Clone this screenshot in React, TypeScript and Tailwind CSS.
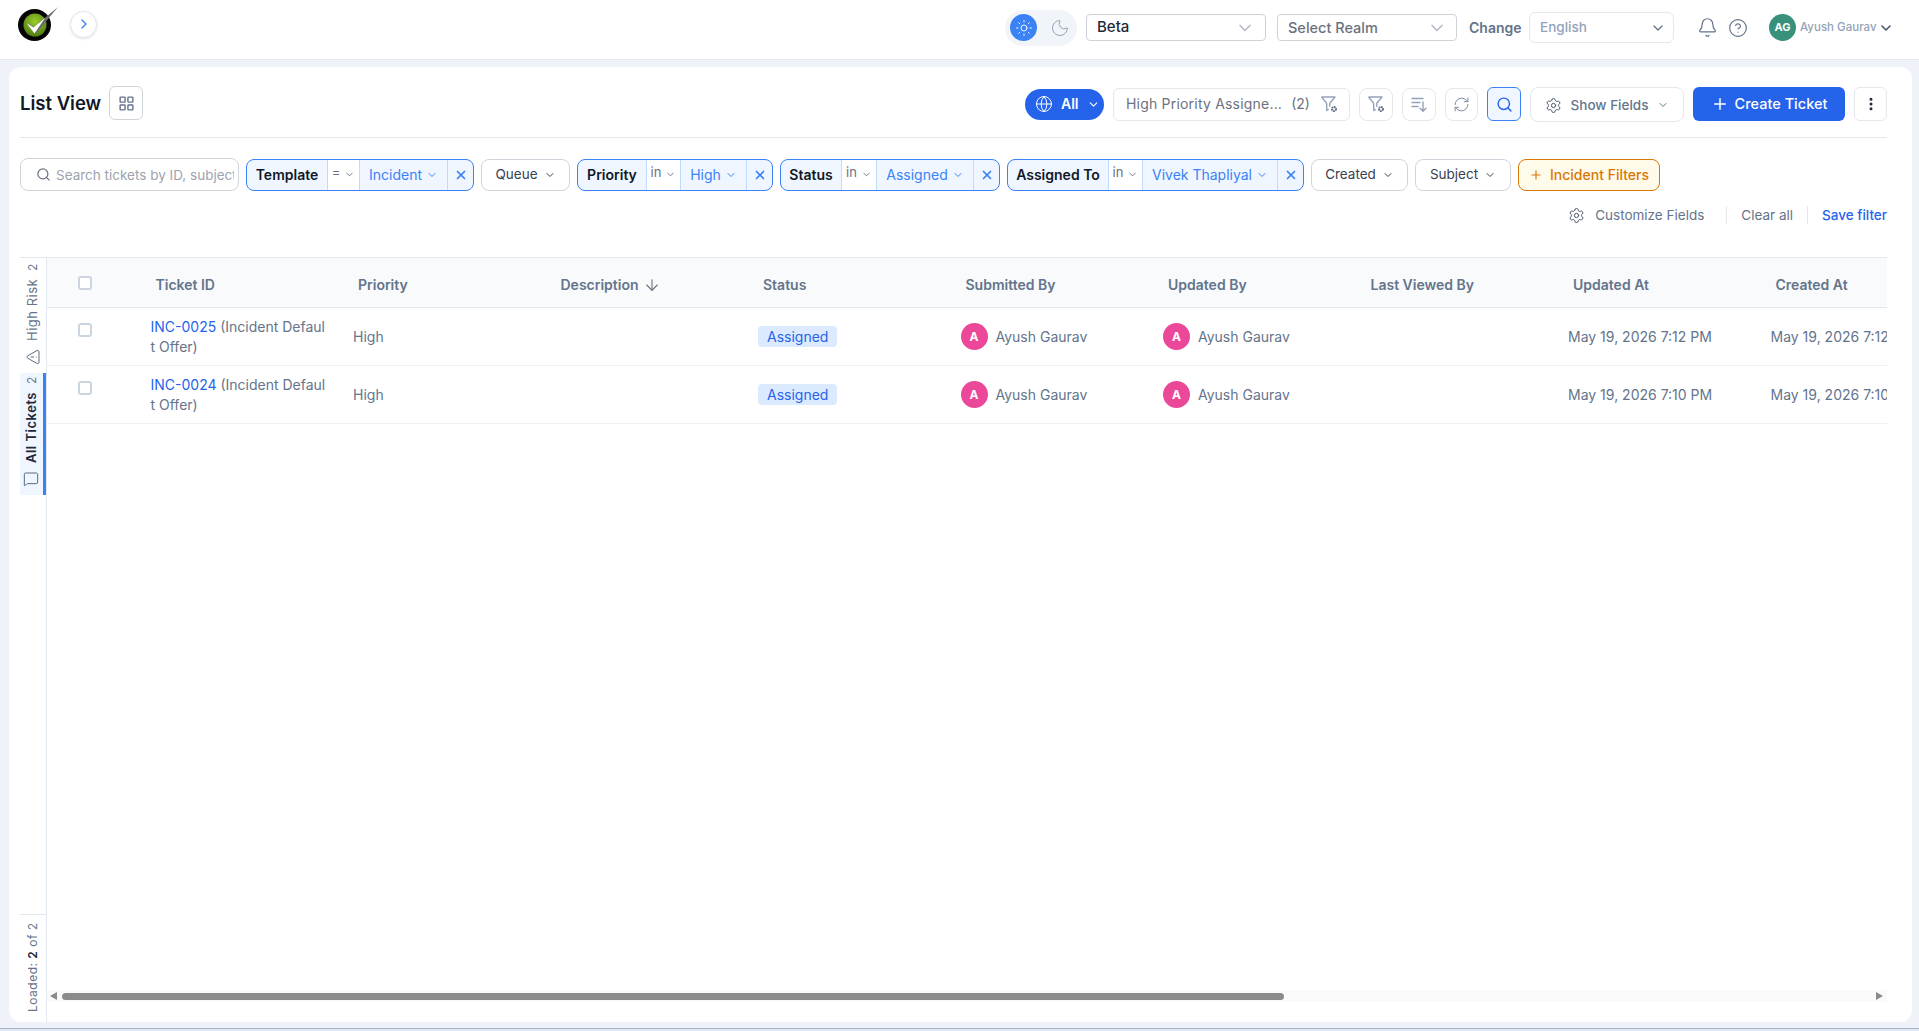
import React from "react";
import {
  ArrowDown,
  Bell,
  ChevronDown,
  ChevronRight,
  CircleHelp,
  EllipsisVertical,
  Globe,
  LayoutGrid,
  MessageSquare,
  Moon,
  Plus,
  RefreshCw,
  Search,
  Settings,
  Sun,
  TriangleAlert,
  X,
} from "lucide-react";

function Logo() {
  return (
    <svg width="40" height="34" viewBox="0 0 40 34" className="shrink-0">
      <defs>
        <radialGradient id="ball" cx="50%" cy="35%" r="65%">
          <stop offset="0%" stopColor="#9ccc2c" />
          <stop offset="100%" stopColor="#4f7f10" />
        </radialGradient>
      </defs>
      <ellipse cx="16.5" cy="18" rx="16.5" ry="16" fill="#050505" />
      <circle cx="17" cy="18" r="11.5" fill="url(#ball)" />
      <path d="M8 15.5 L16 20 L40 0 L17.5 27 Z" fill="#6b6b6b" />
      <path d="M8.5 16 L15.5 20.5 L27 11 L16.5 26.5 Z" fill="#ffffff" />
    </svg>
  );
}

function FunnelGear({ size = 20 }: { size?: number }) {
  return (
    <svg width={size} height={size} viewBox="0 0 20 20" fill="none" stroke="#94a3b8" strokeWidth="1.4">
      <path d="M2.5 3h13.5l-5.2 6.2v3.6M7.7 9.2 2.5 3M7.7 9.2v7.3l2-1.2" strokeLinejoin="round" />
      <circle cx="15" cy="15" r="2" strokeWidth="2" strokeDasharray="1.6 0.5" stroke="#64748b" />
    </svg>
  );
}

function SortIcon() {
  return (
    <svg width="18" height="18" viewBox="0 0 18 18" fill="none" stroke="#94a3b8" strokeWidth="1.4" strokeLinecap="round">
      <path d="M2 3.5h11M2 7.5h8M2 11.5h6M13 7v9M10 13.2l3 3 3-3" />
    </svg>
  );
}

function Chip({
  label,
  op,
  value,
  width,
  labelWidth,
  opWidth,
}: {
  label: string;
  op: string;
  value: string;
  width: string;
  labelWidth: string;
  opWidth: string;
}) {
  return (
    <div className={`flex h-8 shrink-0 overflow-hidden rounded-lg border border-[#3b82f6] bg-[#eff6ff] ${width}`}>
      <div className={`flex shrink-0 items-center justify-center text-sm font-semibold text-[#111827] ${labelWidth}`}>{label}</div>
      <div className={`flex shrink-0 items-center justify-center gap-1 border-x border-[#bfdbfe] bg-white text-[13px] text-[#6b7280] ${opWidth}`}>
        <span className="-mt-[3px]">{op}</span>
        <ChevronDown size={11} />
      </div>
      <div className="flex flex-1 items-center justify-center gap-1 text-sm text-[#3b82f6]">
        {value}
        <ChevronDown size={12} />
      </div>
      <div className="flex w-[26px] shrink-0 items-center justify-center border-l border-[#bfdbfe] text-[#3b82f6]">
        <X size={14} strokeWidth={3} />
      </div>
    </div>
  );
}

function PlainFilter({ label, width }: { label: string; width: string }) {
  return (
    <div className={`flex h-8 shrink-0 items-center justify-center gap-[6px] rounded-lg border border-[#d1d5db] bg-white text-[13.5px] text-[#374151] ${width}`}>
      {label}
      <ChevronDown size={12} />
    </div>
  );
}

function IconBox({ children, width = "w-[34px]" }: { children: React.ReactNode; width?: string }) {
  return (
    <div className={`flex h-[33px] shrink-0 items-center justify-center rounded-lg border border-[#e5e7eb] bg-white ${width}`}>
      {children}
    </div>
  );
}

const columns = [
  "Ticket ID",
  "Priority",
  "Description",
  "Status",
  "Submitted By",
  "Updated By",
  "Last Viewed By",
  "Updated At",
  "Created At",
];

const tickets = [
  { id: "INC-0025", date: "May 19, 2026 7:12 PM" },
  { id: "INC-0024", date: "May 19, 2026 7:10 PM" },
];

function Person() {
  return (
    <div className="flex items-center gap-2">
      <span className="flex h-[27px] w-[27px] items-center justify-center rounded-full bg-[#ec4899] text-xs font-bold text-white">A</span>
      <span>Ayush Gaurav</span>
    </div>
  );
}

function Cell({ children }: { children?: React.ReactNode }) {
  return <div className="w-[202.5px] shrink-0 whitespace-nowrap pl-[3px]">{children}</div>;
}

function Checkbox() {
  return <span className="block h-[14px] w-[14px] rounded-[3px] border-2 border-[#cbd5e1] bg-white" />;
}

export default function App() {
  return (
    <div className="flex h-screen flex-col overflow-hidden bg-[#eff3f9] font-[Inter,sans-serif]">
      <header className="flex h-[60px] shrink-0 items-center justify-between border-b border-[#e2e8f0] bg-white pl-[18px] pr-[25px]">
        <div className="-mt-[11px] flex items-center gap-3">
          <Logo />
          <button className="flex h-[27px] w-[27px] items-center justify-center rounded-full border border-[#dbe3ef] text-[#3b82f6] shadow-sm">
            <ChevronRight size={16} />
          </button>
        </div>
        <div className="-mt-[4px] flex items-center">
          <div className="flex h-9 w-[72px] items-center gap-[13px] rounded-full bg-[#f1f5f9] pl-[5px]">
            <span className="flex h-[27px] w-[27px] items-center justify-center rounded-full bg-[#3b82f6] text-white">
              <Sun size={18} strokeWidth={1.2} />
            </span>
            <Moon size={20} strokeWidth={1.2} className="text-[#94a3b8]" />
          </div>
          <div className="ml-[9px] flex h-[27px] w-[180px] items-center justify-between rounded border border-[#cfd3d8] pl-[10px] pr-[10px] text-[15px] font-medium text-[#1f2937]">
            Beta
            <ChevronDown size={20} className="text-[#b6bcc6]" />
          </div>
          <div className="ml-[11px] flex h-[27px] w-[180px] items-center justify-between rounded border border-[#cfd3d8] pl-[10px] pr-[9px] text-[14.5px] font-medium text-[#6b7280]">
            Select Realm
            <ChevronDown size={20} className="text-[#b6bcc6]" />
          </div>
          <span className="ml-3 w-[50px] text-sm font-semibold text-[#64748b]">Change</span>
          <div className="ml-[10px] flex h-[31px] w-[145px] items-center justify-between rounded-md border border-[#e5e7eb] pl-[10px] pr-[7px] text-[13.5px] font-medium text-[#94a3b8]">
            English
            <ChevronDown size={16} className="text-[#64748b]" />
          </div>
          <Bell size={21} strokeWidth={1.4} className="ml-[23px] text-[#64748b]" />
          <CircleHelp size={20} strokeWidth={1.4} className="ml-[10px] text-[#64748b]" />
          <span className="ml-[21px] flex h-[27px] w-[27px] items-center justify-center rounded-full bg-[#38917a] text-[11px] font-bold text-white">AG</span>
          <span className="ml-1 w-[75px] whitespace-nowrap text-[11.5px] font-medium text-[#94a3b8]">Ayush Gaurav</span>
          <ChevronDown size={16} strokeWidth={2.4} className="ml-[3px] text-[#475569]" />
        </div>
      </header>

      <div className="flex min-h-0 flex-1 pl-[9px] pr-[7px] pt-[7px]">
        <main className="flex min-w-0 flex-1 flex-col rounded-xl bg-white pl-[11px] pr-[25px] pt-[19px]">
          <div className="flex h-9 shrink-0 items-center justify-between">
            <div className="-mt-[2px] flex items-center gap-2">
              <h1 className="pt-px text-[18.5px] font-semibold text-[#111827]">List View</h1>
              <div className="flex h-[34px] w-[34px] items-center justify-center rounded-md border border-[#d1d5db] text-[#64748b]">
                <LayoutGrid size={17} />
              </div>
            </div>
            <div className="flex items-center gap-[9px]">
              <div className="flex h-[31px] w-[79px] items-center gap-2 rounded-full bg-[#2563eb] pl-[10px] text-sm font-semibold text-white">
                <Globe size={18} strokeWidth={1.3} />
                All
                <ChevronDown size={13} />
              </div>
              <div className="flex h-[33px] w-[237px] items-center justify-between rounded-md border border-[#e5e7eb] pl-3 pr-[10px] text-sm text-[#6b7280]">
                <span className="tracking-[0.2px]">High Priority Assigne...</span>
                <span>(2)</span>
                <FunnelGear />
              </div>
              <IconBox><FunnelGear /></IconBox>
              <IconBox><SortIcon /></IconBox>
              <IconBox width="w-[33px]"><RefreshCw size={17} strokeWidth={1.4} className="text-[#7c8ba1]" /></IconBox>
              <div className="flex h-[34px] w-[34px] items-center justify-center rounded-md border border-[#3b82f6] bg-[#eff6ff] text-[#2563eb]">
                <Search size={17} />
              </div>
              <div className="flex h-[35px] w-[154px] items-center justify-center gap-[9px] rounded-lg border border-[#e5e7eb] pt-[2px] text-[13.5px] font-medium text-[#64748b]">
                <Settings size={17} strokeWidth={1.4} className="text-[#475569]" />
                Show Fields
                <ChevronDown size={12} />
              </div>
              <div className="flex h-[34px] w-[152px] items-center justify-center gap-[6px] rounded-md bg-[#2563eb] text-[14.5px] font-medium text-white">
                <Plus size={18} />
                Create Ticket
              </div>
              <div className="flex h-[34px] w-[33px] items-center justify-center rounded-md border border-[#e5e7eb] text-[#1f2937]">
                <EllipsisVertical size={16} strokeWidth={2.5} />
              </div>
            </div>
          </div>

          <div className="mt-[15px] h-px shrink-0 bg-[#e5e7eb]" />

          <div className="mt-5 flex shrink-0 items-center gap-[7px]">
            <div className="flex h-[33px] w-[219px] shrink-0 items-center gap-[5px] overflow-hidden rounded-lg border border-[#d1d5db] pl-[15px] pr-[4px]">
              <Search size={15} className="shrink-0 text-[#6b7280]" />
              <input
                className="min-w-0 flex-1 bg-transparent pt-px text-[13.5px] outline-none placeholder:text-[#9ca3af]"
                placeholder="Search tickets by ID, subject"
              />
            </div>
            <Chip label="Template" op="=" value="Incident" width="w-[228px]" labelWidth="w-[80px]" opWidth="w-[33px]" />
            <PlainFilter label="Queue" width="w-[89px]" />
            <Chip label="Priority" op="in" value="High" width="w-[196px]" labelWidth="w-[68px]" opWidth="w-[35px]" />
            <Chip label="Status" op="in" value="Assigned" width="w-[220px]" labelWidth="w-[60px]" opWidth="w-[36px]" />
            <Chip label="Assigned To" op="in" value="Vivek Thapliyal" width="w-[297px]" labelWidth="w-[100px]" opWidth="w-[35px]" />
            <PlainFilter label="Created" width="w-[97px]" />
            <PlainFilter label="Subject" width="w-[96px]" />
            <div className="flex h-8 w-[142px] shrink-0 items-center justify-center gap-[7px] rounded-lg border border-[#d97706] bg-[#fffbeb] text-sm font-medium text-[#d97706]">
              <Plus size={14} />
              Incident Filters
            </div>
          </div>

          <div className="mt-[14px] flex h-5 shrink-0 items-center justify-end text-[13.5px] text-[#64748b]">
            <Settings size={17} strokeWidth={1.4} className="mr-[10px] text-[#475569]" />
            <span>Customize Fields</span>
            <span className="ml-[22px] mr-[14px] h-[18px] w-px bg-[#e5e7eb]" />
            <span>Clear all</span>
            <span className="mx-[14px] h-[18px] w-px bg-[#e5e7eb]" />
            <span className="font-medium text-[#2563eb]">Save filter</span>
          </div>

          <div className="mt-8 flex min-h-0 flex-1">
            <aside className="flex w-[27px] shrink-0 flex-col border-r border-t border-[#e2e8f0]">
              <div className="h-[112px]">
                <div className="flex h-full w-full rotate-180 items-center gap-2 ps-[5px] text-[13px] tracking-[0.5px] text-[#64748b] [writing-mode:vertical-rl]">
                  <TriangleAlert size={16} strokeWidth={1.3} className="rotate-90 text-[#475569]" />
                  <span>High Risk</span>
                  <span className="text-xs">2</span>
                </div>
              </div>
              <div className="mt-[3px] h-[122px] border-r-[3px] border-[#3b82f6] bg-[#eff6ff]">
                <div className="flex h-full w-full rotate-180 items-center gap-2 ps-2 text-[13px] font-semibold tracking-[0.5px] text-[#1e293b] [writing-mode:vertical-rl]">
                  <MessageSquare size={16} strokeWidth={1.3} className="rotate-180 text-[#475569]" />
                  <span>All Tickets</span>
                  <span className="text-xs font-normal text-[#64748b]">2</span>
                </div>
              </div>
              <div className="mt-auto h-[108px] border-t border-[#e2e8f0]">
                <div className="flex h-full w-full rotate-180 items-center ps-[10px] text-xs tracking-[0.5px] text-[#64748b] [writing-mode:vertical-rl]">
                  <span>
                    Loaded: <b className="font-semibold text-[#1e293b]">2</b> of 2
                  </span>
                </div>
              </div>
            </aside>

            <section className="flex min-w-0 flex-1 flex-col">
              <div className="min-h-0 flex-1 overflow-hidden">
                <div className="w-max text-sm text-[#64748b]">
                  <div className="flex h-[51px] items-center border-y border-[#e2e8f0] bg-[#f8fafc] font-semibold">
                    <div className="flex w-[100.5px] shrink-0 pl-[31px]">
                      <Checkbox />
                    </div>
                    {columns.map((c) => (
                      <div key={c} className="flex w-[202.5px] shrink-0 items-center gap-1 pl-2 pt-1">
                        {c}
                        {c === "Description" && <ArrowDown size={18} strokeWidth={1.5} className="text-[#6b7280]" />}
                      </div>
                    ))}
                  </div>
                  {tickets.map((t) => (
                    <div key={t.id} className="flex h-[58px] items-center border-b border-[#eef2f7]">
                      <div className="-mt-[13px] flex w-[100.5px] shrink-0 pl-[31px]">
                        <Checkbox />
                      </div>
                      <div className="w-[202.5px] shrink-0 pl-[3px]">
                        <p className="w-[176px] break-all leading-5">
                          <span className="text-[#2563eb]">{t.id}</span> (Incident Default Offer)
                        </p>
                      </div>
                      <Cell>High</Cell>
                      <Cell />
                      <Cell>
                        <span className="rounded bg-[#dbeafe] px-[9px] py-[2px] text-[#2563eb]">Assigned</span>
                      </Cell>
                      <Cell><Person /></Cell>
                      <Cell><Person /></Cell>
                      <Cell />
                      <Cell>{t.date}</Cell>
                      <Cell>{t.date}</Cell>
                    </div>
                  ))}
                </div>
              </div>
              <div className="mb-5 flex h-3 shrink-0 items-center bg-[#fafafa] pl-[3px] pr-[4px]">
                <svg width="7" height="8" viewBox="0 0 7 8" className="shrink-0">
                  <path d="M7 0v8L0 4z" fill="#8b8b8b" />
                </svg>
                <div className="ml-[5px] h-[7px] w-[1222px] rounded-full bg-[#8b8b8b]" />
                <svg width="7" height="8" viewBox="0 0 7 8" className="ml-auto shrink-0">
                  <path d="M0 0v8l7-4z" fill="#8b8b8b" />
                </svg>
              </div>
            </section>
          </div>
        </main>
      </div>
      <div className="mt-[6px] h-[3px] shrink-0 border-t border-[#aab4c8] bg-[#dfe7f5]" />
    </div>
  );
}
